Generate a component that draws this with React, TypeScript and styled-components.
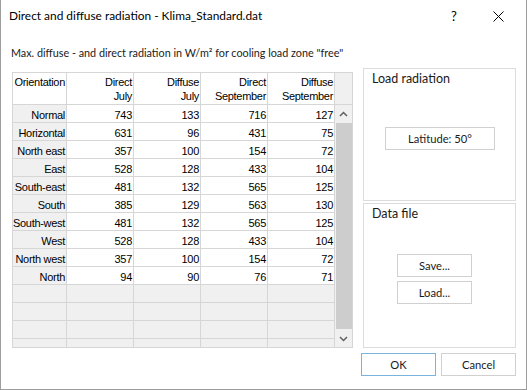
import React from "react";
import styled, { createGlobalStyle } from "styled-components";

const GlobalStyle = createGlobalStyle`
  html, body { margin: 0; padding: 0; background: #ffffff; }
  body { font-family: Lato, "Liberation Sans", sans-serif; color: #000; }
  * { box-sizing: border-box; }
`;

const LINE = "#d6d6d6";

const Window = styled.div`
  width: 527px;
  height: 390px;
  background: #ffffff;
  border-left: 1px solid #9d9d9d;
  border-right: 1px solid #9d9d9d;
  border-bottom: 1px solid #9d9d9d;
  display: flex;
  flex-direction: column;
  overflow: hidden;
`;

const TitleBar = styled.div`
  height: 32px;
  display: flex;
  align-items: flex-start;
  padding: 8px 6px 0 8px;
  flex: none;
`;

const Title = styled.div`
  flex: 1;
  font-family: Lato, sans-serif;
  font-size: 11.9px;
  line-height: 16px;
  white-space: nowrap;
`;

const TitleButton = styled.div`
  width: 44px;
  height: 16px;
  display: flex;
  align-items: center;
  justify-content: center;
  font-family: Lato, sans-serif;
  font-size: 13px;
  line-height: 16px;
`;

const Content = styled.div`
  flex: 1;
  display: flex;
  flex-direction: column;
  padding: 0 10px 0 11px;
`;

const Subtitle = styled.div`
  margin-top: 14px;
  margin-left: -1px;
  font-family: Lato, sans-serif;
  font-size: 10.8px;
  line-height: 14px;
  white-space: nowrap;
  color: #1a1a1a;
`;

const MainRow = styled.div`
  margin-top: 8px;
  display: flex;
  gap: 10px;
  height: 280px;
`;

const GridBox = styled.div`
  margin-top: 4px;
  width: 341px;
  height: 276px;
  border: 1px solid ${LINE};
  background: ${LINE};
  display: flex;
  gap: 1px;
  overflow: hidden;
`;

const Cells = styled.div`
  display: grid;
  grid-template-columns: 53px 66px 66px 66px 66px;
  grid-template-rows: 31px;
  grid-auto-rows: 17px;
  gap: 1px;
  align-content: start;
`;

const Cell = styled.div<{ $kind: "head" | "rowhead" | "data" | "empty" }>`
  display: flex;
  justify-content: flex-end;
  overflow: hidden;
  white-space: nowrap;
  font-family: "Liberation Sans", Arial, sans-serif;
  font-size: 11px;
  letter-spacing: -0.3px;
  padding-right: 1px;
  background: ${(p) => (p.$kind === "rowhead" || p.$kind === "empty" ? "#f0f0f0" : "#ffffff")};
  line-height: ${(p) => (p.$kind === "head" ? "14px" : "12px")};
  padding-top: ${(p) => (p.$kind === "head" ? "2px" : "4px")};
  text-align: right;
`;

const HeadText = styled.div`
  flex: none;
`;

const ScrollCol = styled.div`
  width: 17px;
  display: flex;
  flex-direction: column;
  gap: 1px;
`;

const Corner = styled.div`
  height: 31px;
  background: #f0f0f0;
  flex: none;
`;

const ScrollBar = styled.div`
  flex: 1;
  background: #f0f0f0;
  display: flex;
  flex-direction: column;
`;

const ArrowBtn = styled.div`
  height: 17px;
  display: flex;
  align-items: center;
  justify-content: center;
  flex: none;
`;

const Track = styled.div`
  flex: 1;
  padding: 1px 0 1px 1px;
  display: flex;
`;

const Thumb = styled.div`
  flex: 1;
  background: #cdcdcd;
`;

const Side = styled.div`
  width: 153px;
  display: flex;
  flex-direction: column;
  gap: 2px;
`;

const Group = styled.div<{ $h: number }>`
  height: ${(p) => p.$h}px;
  border: 1px solid #dcdcdc;
  padding: 2px 0 0 0;
  display: flex;
  flex-direction: column;
  align-items: flex-start;
`;

const GroupLabel = styled.div`
  font-family: Lato, sans-serif;
  font-size: 12.5px;
  line-height: 16px;
  padding-left: 8px;
  color: #1a1a1a;
`;

const ButtonStack = styled.div<{ $top: number; $left: number }>`
  margin-top: ${(p) => p.$top}px;
  margin-left: ${(p) => p.$left}px;
  display: flex;
  flex-direction: column;
  gap: 4px;
`;

const Button = styled.div<{ $w: number; $focus?: boolean }>`
  width: ${(p) => p.$w}px;
  height: 23px;
  border: 1px solid ${(p) => (p.$focus ? "#7ab4dd" : "#d0d0d0")};
  background: #ffffff;
  display: flex;
  align-items: center;
  justify-content: center;
  font-family: Lato, sans-serif;
  font-size: 11.2px;
  line-height: 14px;
  color: #1a1a1a;
`;

const Footer = styled.div`
  margin-top: 5px;
  display: flex;
  justify-content: flex-end;
  gap: 5px;
`;

const headers = ["Orientation", "Direct\nJuly", "Diffuse\nJuly", "Direct\nSeptember", "Diffuse\nSeptember"];

const rows: [string, number, number, number, number][] = [
  ["Normal", 743, 133, 716, 127],
  ["Horizontal", 631, 96, 431, 75],
  ["North east", 357, 100, 154, 72],
  ["East", 528, 128, 433, 104],
  ["South-east", 481, 132, 565, 125],
  ["South", 385, 129, 563, 130],
  ["South-west", 481, 132, 565, 125],
  ["West", 528, 128, 433, 104],
  ["North west", 357, 100, 154, 72],
  ["North", 94, 90, 76, 71],
];

const Chevron = ({ up }: { up?: boolean }) => (
  <svg width="9" height="6" viewBox="0 0 9 6">
    <path
      d={up ? "M1 5 L4.5 1.5 L8 5" : "M1 1 L4.5 4.5 L8 1"}
      fill="none"
      stroke="#606060"
      strokeWidth="1.5"
    />
  </svg>
);

const CloseIcon = () => (
  <svg width="11" height="11" viewBox="0 0 11 11">
    <path d="M0.5 0.5 L10.5 10.5 M10.5 0.5 L0.5 10.5" stroke="#000" strokeWidth="1" fill="none" />
  </svg>
);

export default function App() {
  return (
    <>
      <GlobalStyle />
      <Window>
        <TitleBar>
          <Title>Direct and diffuse radiation - Klima_Standard.dat</Title>
          <TitleButton>?</TitleButton>
          <TitleButton>
            <CloseIcon />
          </TitleButton>
        </TitleBar>
        <Content>
          <Subtitle>Max. diffuse - and direct radiation in W/m² for cooling load zone "free"</Subtitle>
          <MainRow>
            <GridBox>
              <Cells>
                {headers.map((h) => (
                  <Cell key={h} $kind="head">
                    <HeadText>
                      {h.split("\n").map((l, i) => (
                        <div key={i}>{l}</div>
                      ))}
                    </HeadText>
                  </Cell>
                ))}
                {rows.map((r) => (
                  <React.Fragment key={r[0]}>
                    <Cell $kind="rowhead">{r[0]}</Cell>
                    <Cell $kind="data">{r[1]}</Cell>
                    <Cell $kind="data">{r[2]}</Cell>
                    <Cell $kind="data">{r[3]}</Cell>
                    <Cell $kind="data">{r[4]}</Cell>
                  </React.Fragment>
                ))}
                {Array.from({ length: 20 }).map((_, i) => (
                  <Cell key={"e" + i} $kind="empty" />
                ))}
              </Cells>
              <ScrollCol>
                <Corner />
                <ScrollBar>
                  <ArrowBtn>
                    <Chevron up />
                  </ArrowBtn>
                  <Track>
                    <Thumb />
                  </Track>
                  <ArrowBtn>
                    <Chevron />
                  </ArrowBtn>
                </ScrollBar>
              </ScrollCol>
            </GridBox>
            <Side>
              <Group $h={133}>
                <GroupLabel>Load radiation</GroupLabel>
                <ButtonStack $top={40} $left={21}>
                  <Button $w={110}>Latitude: 50°</Button>
                </ButtonStack>
              </Group>
              <Group $h={145}>
                <GroupLabel>Data file</GroupLabel>
                <ButtonStack $top={32} $left={33}>
                  <Button $w={75}>Save...</Button>
                  <Button $w={75}>Load...</Button>
                </ButtonStack>
              </Group>
            </Side>
          </MainRow>
          <Footer>
            <Button $w={75} $focus>
              OK
            </Button>
            <Button $w={75}>Cancel</Button>
          </Footer>
        </Content>
      </Window>
    </>
  );
}
